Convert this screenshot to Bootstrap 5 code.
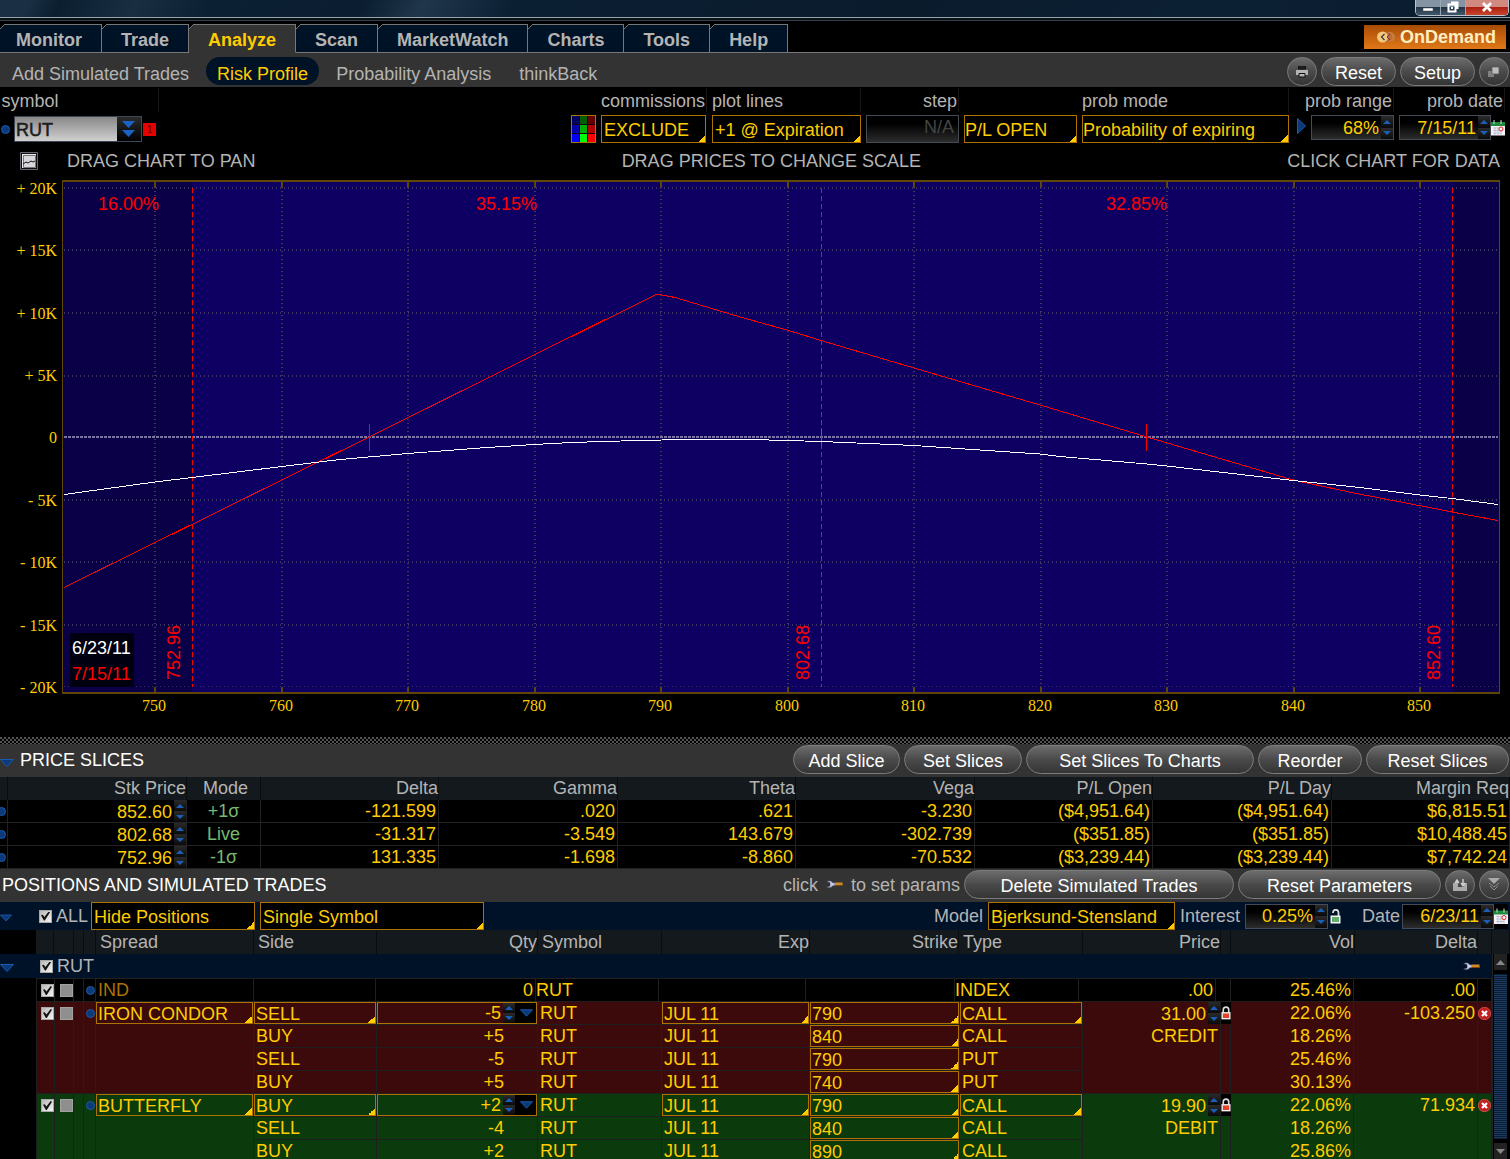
<!DOCTYPE html>
<html lang="en">
<head>
<meta charset="utf-8">
<meta name="viewport" content="width=device-width, initial-scale=1">
<title>Risk Profile</title>
<link href="https://cdn.jsdelivr.net/npm/bootstrap@5.3.0/dist/css/bootstrap.min.css" rel="stylesheet">
<style>
:root{--gold:#ffcc00;--grey:#b4b4b4;--bar:#333;--navy:#001228;--head:#13191d;--amber:#ad7200}
html{overflow:hidden}
body{background:#000;color:var(--grey);font:18px/22px "Liberation Sans",Arial,sans-serif;overflow:hidden;height:100vh}
button,input,select{font:inherit;color:inherit}
a{color:inherit;text-decoration:none}
svg{display:block;flex:none}
.titlebar{height:21px;background:linear-gradient(115deg,#1b2f44 0,#1b2f44 2%,#0a1e30 4%,#1a2e42 9%,#0c2033 14%,#0b1e31 24%,#20364a 28%,#0b1f33 34%,#0a1b2c 60%,#0c2034 80%,#0a1c2e 100%);border-bottom:1px solid #33404c;box-shadow:inset 0 -2px 0 #0a0f14,inset 0 -3px 0 #98a4ae}
.winbtns{height:16px;border:1px solid #b9c3cb;border-top:0;border-radius:0 0 5px 5px;overflow:hidden;margin-right:1px}
.winbtns button{border:0;border-right:1px solid #9aa7b2;background:linear-gradient(#8494a2 50%,#223546 50%,#40586c);height:15px;width:25px;padding:0;display:flex;justify-content:center}
.winbtns button:last-child{background:linear-gradient(#d08a80 45%,#a81c10 45%,#c8452c);width:42px;border:0}
.tabs{height:32px;padding-top:3px;border-bottom:1px solid #777}
.tabs a{position:relative;height:29px;line-height:30px;padding:0 19px;font-weight:700;background:#001226;border:1px solid #777;border-left:0}
.tabs a:first-child{padding-left:16px}
.tabs a::before{content:"";position:absolute;left:0;top:-1px;width:6px;height:6px;background:linear-gradient(135deg,#000 3px,#777 3px,#777 4px,transparent 4px)}
.tabs a.on{background:var(--bar);color:var(--gold);border-bottom-color:var(--bar)}
.ondemand{border:0;height:24px;padding:0 10px 0 12px;gap:4px;margin-right:4px;margin-top:1px;font-weight:700;color:#ffefc0;background:linear-gradient(#a84c06,#e07818);line-height:24px}
.strip{background:var(--bar)}
.sub{padding:4px 1px 1px}
.sub a{padding:0 11px;height:28px;line-height:34px;margin-right:6px}
.sub a.on{background:#001226;color:var(--gold);border-radius:14px}
.pill{height:29px;border:1px solid #7c7c7c;border-radius:15px;color:#fff;background:linear-gradient(#6c6c6c,#4a4a4a 50%,#353535);padding:2px 0 0;line-height:26px;text-align:center;white-space:nowrap}
.round{width:30px;padding:0;display:flex;align-items:center;justify-content:center}
.w1{width:75px}.w2{width:107px}.w3{width:118px}.w4{width:228px}.w5{width:104px}.w6{width:143px}.w7{width:270px}.w8{width:203px}
.gap4{gap:4px}.gap5{gap:5px}
.fieldcol{display:flex;flex-direction:column;align-items:stretch}
.fieldcol>label{height:24px;line-height:26px;margin:1px 0 3px;border-right:1px solid #161616;padding-right:1px;white-space:nowrap}
.pick{appearance:none;height:28px;border:1px solid var(--amber);border-radius:0;color:var(--gold);padding:2px 2px 0;background:linear-gradient(135deg,transparent 50%,var(--gold) 50%) right bottom/7px 7px no-repeat #000}
.numbox{display:flex;height:25px;border:1px solid #444b55;background:linear-gradient(#000 30%,#2c2c2c)}
.numbox input{flex:1;min-width:0;width:20px;border:0;background:none;color:var(--gold);text-align:right;padding:0 2px 0 0}
.stepper{display:flex;flex-direction:column;width:12px;flex:none;background:#000}
.stepper button{flex:1;border:0;padding:0;background:linear-gradient(#2a2a2a,#0a0a0a);display:flex;align-items:center;justify-content:center}
.stepper button::before{content:"";border:4px solid transparent;border-top:0;border-bottom:4px solid #1a5eb8}
.stepper button+button::before{border-bottom:0;border-top:4px solid #1a5eb8}
.blue{width:9px;height:9px;border-radius:50%;background:#0c3a78;border:1px solid #1a5ab0;flex:none}
.symbolbox{border:1px solid #3c4654;height:26px}
.symbolbox input{width:102px;height:24px;border:0;padding:2px 1px 0;color:#1c1c1c;-webkit-text-stroke:.5px #1c1c1c;background:linear-gradient(#888,#d0d0d0)}
.symbolbox button{width:24px;border:0;background:linear-gradient(#2c2c2c,#000);padding:0 0 0 5px}
.flag{width:13px;height:13px;font-size:10px;line-height:13px;background:#e80000;color:#400;text-align:center}
.grip{height:7px;margin:1px 0 0;background:radial-gradient(circle at 1px 1px,#555 1px,transparent 1px) 0 0/4px 4px,radial-gradient(circle at 1px 1px,#555 1px,transparent 1px) 2px 2px/4px 4px}
.section{height:33px}
.bartitle{color:#fff;font-size:18px;font-weight:400;margin:0;line-height:32px}
.grid{table-layout:fixed;width:100%;border-collapse:separate;border-spacing:0}
.grid th{font-weight:400;background:var(--head);height:23px;line-height:23px;border-right:1px solid #0a0d0f;padding:0 0 0 4px;white-space:nowrap}
.grid td{height:23px;line-height:22px;border-right:1px solid #1f1f1f;border-bottom:1px solid #1f1f1f;padding:0 2px;color:var(--gold);white-space:nowrap;vertical-align:top}
.grid td.cell{padding:0}
.slices td{border-color:#222}
.slices td:first-child{padding:0;overflow:hidden}
.slices td:first-child .blue{margin:7px 0 0 -3px;display:block}
.slices .mode{color:#78b872;text-align:center}
.slices .stepper{height:22px}
.inline{display:flex;justify-content:flex-end;height:22px}
.inline input{min-width:0;width:20px;flex:1;border:0;background:none;text-align:right;padding:2px 2px 0 0;color:var(--gold)}
.pos .pick{display:block;width:100%;height:22px;padding:0 1px 2px;background-color:transparent}
.qty{border:1px solid var(--amber);height:22px}
.qty .drop{width:21px;border:0;background:#000;padding:0 5px}
.grid td.leg{padding-right:33px}
.spreads .red td{background:#3c0a0a}
.spreads .green td{background:#0b3a0c}
.hdr th{height:24px}
.indent{padding-left:36px}
.indexrow td{border-top:1px solid #222;height:24px}
.indexrow td:first-child,.spreads td.first{border-left:1px solid #1f1f1f}
.allbar{background:var(--navy);height:28px}
.symbar{background:var(--navy);height:24px}
.tick{appearance:none;width:13px;height:13px;margin:0;background:linear-gradient(135deg,#b8b8b8,#f4f4f4);border:1px solid #a8a8a8;flex:none;display:block}
.tick:checked::before{content:"";display:block;width:9px;height:9px;margin:1px;background:#111;clip-path:polygon(0 42%,20% 35%,38% 62%,85% 0,100% 8%,42% 100%,32% 100%)}
.chip{display:block;width:13px;height:13px;background:#8f8f8f;border:1px solid #a2a2a2}
td .tick{margin:5px auto 0 4px}
td .chip{margin:5px auto 0 5px}
td .blue{display:block;margin:7px 0 0 2px}
.del{border:0;background:none;padding:0;display:block;margin-top:5px}
.vscroll{width:18px;flex:none;background:#000;border-left:1px solid #222;padding:0 3px 0 1px}
.vscroll button{height:16px;border:0;background:#222;padding:0;display:flex;align-items:center;justify-content:center}
.vscroll .thumb{background:repeating-linear-gradient(#0b1c33 0 1px,#1d3a60 1px 2px)}
.onblack{background:#000}
.chart text{font-family:"Liberation Sans",Arial,sans-serif;font-size:18px;fill:#f00}
.chart .ax text{font-family:"Liberation Serif","Times New Roman",serif;font-size:16px;fill:var(--gold)}
</style>
<script src="https://cdn.jsdelivr.net/npm/bootstrap@5.3.0/dist/js/bootstrap.bundle.min.js"></script>
</head>
<body class="d-flex flex-column">
<svg width="0" height="0" class="position-absolute" aria-hidden="true">
  <symbol id="cal" viewBox="0 0 14 16"><path d="M0 3h14v12.500H0z" fill="#f2f2f8"/><path d="M0 2h14v4H0z" fill="#1c8c3c"/><path d="M3 0v4M10 0v4" stroke="#ddd"/><path d="M2 8h10M2 10.500h10M2 13h8M4 7v8M7 7v8M10 7v8" stroke="#b8b8cc" stroke-width=".8"/><circle cx="10" cy="9" r="2" fill="#fff" stroke="#e22"/></symbol>
  <symbol id="wrench" viewBox="0 0 17 9"><path d="M.5 1.500Q4.500-.5 7 2.800H9v3H7Q4.500 9 .5 7L4 6V2.800z" fill="#c8cce8" stroke="#334" stroke-width=".5"/><path d="M9 2.500h7.500v3.500H9z" fill="#d08a28"/><path d="M9 5h7.500v1H9z" fill="#7a4408"/></symbol>
  <symbol id="lock" viewBox="0 0 11 15"><path d="M2.500 7V4a3 3 0 0 1 6 0v3" fill="none" stroke="#ddd" stroke-width="1.800"/><path d="M.5 6.500h10v8H.5z" fill="#f2f2f2"/><path d="M2 8h7v5H2z" fill="#e0452c"/></symbol>
  <symbol id="unlock" viewBox="0 0 11 15"><path d="M3 4V3.500a2.700 2.700 0 0 1 5.500 0V7" fill="none" stroke="#ddd" stroke-width="1.800"/><path d="M.5 6.500h10v8H.5z" fill="#f2f2f2"/><path d="M2 8h7v5H2z" fill="#5fae6a"/></symbol>
  <symbol id="tri" viewBox="0 0 14 8"><path d="M.5.500h13L7 7.500z" fill="#0c3a78" stroke="#1a5ab0"/></symbol>
  <symbol id="kill" viewBox="0 0 13 13"><circle cx="6.500" cy="6.500" r="6.200" fill="#c41e1e" stroke="#e87070" stroke-width=".6"/><path d="M4 4l5 5M9 4l-5 5" stroke="#fff" stroke-width="2.200"/></symbol>
</svg>

<div class="titlebar d-flex justify-content-end flex-shrink-0">
  <div class="winbtns d-flex">
    <button aria-label="Minimize"><svg width="14" height="13"><path d="M2 8h10v3H2z" fill="#fff" stroke="#445" stroke-width=".5"/></svg></button>
    <button aria-label="Restore"><svg width="14" height="13"><path d="M5 2.500h6.500V9M2.500 4.500h7v7h-7z" fill="none" stroke="#fff" stroke-width="2"/><path d="M5 7h2v2H5z" fill="#fff"/></svg></button>
    <button aria-label="Close"><svg width="14" height="13"><path d="M3 3l8 8M11 3l-8 8" stroke="#fff" stroke-width="2.800"/></svg></button>
  </div>
</div>

<nav class="tabs d-flex flex-shrink-0">
  <a href="#">Monitor</a><a href="#">Trade</a><a href="#" class="on">Analyze</a><a href="#">Scan</a><a href="#">MarketWatch</a><a href="#">Charts</a><a href="#">Tools</a><a href="#">Help</a>
  <button class="ondemand d-flex align-items-center ms-auto"><svg width="20" height="14" viewBox="0 0 20 14"><circle cx="14" cy="7" r="5" fill="#c87a40"/><circle cx="11" cy="7" r="5" fill="#b86a38"/><circle cx="6.500" cy="7" r="5.500" fill="#f4c878"/><path d="M8.500 4L5.500 7l3 3" fill="none" stroke="#335" stroke-width="1.200"/><path d="M14 4l-3 3 3 3" fill="none" stroke="#733"/></svg>OnDemand</button>
</nav>

<div class="strip sub d-flex flex-shrink-0">
  <a href="#">Add Simulated Trades</a><a href="#" class="on">Risk Profile</a><a href="#">Probability Analysis</a><a href="#">thinkBack</a>
  <div class="ms-auto d-flex gap4">
    <button class="pill round" aria-label="Print"><svg width="14" height="12"><path d="M3.500 0h7v3h-7z" fill="#222" stroke="#111"/><path d="M1 4h12v5H1z" fill="#b4b4b4"/><path d="M4 7.500h6v3.500H4z" fill="#b4b4b4" stroke="#111"/></svg></button>
    <button class="pill w1">Reset</button><button class="pill w1">Setup</button>
    <button class="pill round" aria-label="Detach"><svg width="12" height="12"><path d="M0 5h6v6H0z" fill="#808080"/><path d="M4 1h7v7H4z" fill="#bbb" stroke="#555" stroke-width=".7"/></svg></button>
  </div>
</div>

<div class="d-flex flex-shrink-0 gap5">
  <div class="fieldcol me-auto">
    <label for="sym" style="width:159px">&#8202;symbol</label>
    <div class="d-flex align-items-center" style="padding:1px 0 0 1px">
      <span class="blue me-1"></span>
      <div class="symbolbox d-flex"><input id="sym" value="RUT"><button aria-label="Symbol list"><svg width="14" height="16"><path d="M0 0h13L6.500 7zM0 9h13l-6.500 7z" fill="#1a62c4"/></svg></button></div>
      <span class="flag" style="margin-left:1px">1</span>
    </div>
  </div>
  <button class="border-0 p-0 bg-transparent align-self-end" aria-label="Plot colours"><svg width="25" height="28" shape-rendering="crispEdges"><path d="M.5.500h24v27H.5z" fill="#100010" stroke="#ad7200"/><path d="M1 1h7v8H1z" fill="#000060"/><path d="M9 1h7v8H9z" fill="#006000"/><path d="M17 1h7v8h-7z" fill="#600000"/><path d="M1 10h7v8H1z" fill="#0000b0"/><path d="M9 10h7v8H9z" fill="#00b000"/><path d="M17 10h7v8h-7z" fill="#b00000"/><path d="M1 19h7v8H1z" fill="#00f"/><path d="M9 19h7v8H9z" fill="#0f0"/><path d="M17 19h7v8h-7z" fill="#f00"/></svg></button>
  <div class="fieldcol"><label for="com">commissions</label><select id="com" class="pick" style="width:105px"><option>EXCLUDE</option></select></div>
  <div class="fieldcol"><label for="plt">plot lines</label><select id="plt" class="pick" style="width:149px"><option>+1 @ Expiration</option></select></div>
  <div class="fieldcol"><label for="stp" class="text-end">step</label><input id="stp" value="N/A" disabled class="numbox text-end px-1 pb-1" style="width:93px;height:28px;color:#444"></div>
  <div class="fieldcol"><label for="plo" class="border-0">&nbsp;</label><select id="plo" class="pick ps-0" style="width:113px"><option>P/L OPEN</option></select></div>
  <div class="fieldcol"><label for="pmode">prob mode</label><select id="pmode" class="pick ps-0" style="width:207px"><option>Probability of expiring</option></select></div>
  <button class="border-0 bg-transparent p-0 align-self-end mb-2" aria-label="Apply"><svg width="12" height="17"><path d="M3.500.5v15l8-7.500z" fill="#0c3a78" stroke="#1a5ab0"/></svg></button>
  <div class="fieldcol align-items-end" style="width:83px"><label for="prange">prob range</label><div class="numbox w-100"><input id="prange" value="68%"><span class="stepper"><button aria-label="Up"></button><button aria-label="Down"></button></span></div></div>
  <div class="fieldcol" style="padding-right:5px"><label for="pdate" class="text-end">prob date</label><div class="d-flex align-items-center"><div class="numbox" style="width:92px"><input id="pdate" value="7/15/11"><span class="stepper"><button aria-label="Up"></button><button aria-label="Down"></button></span></div><svg width="14" height="16"><use href="#cal"/></svg></div></div>
</div>

<div class="d-flex flex-shrink-0 align-items-center justify-content-between" style="height:29px;padding:7px 10px 0 20px">
  <div class="d-flex align-items-center"><button class="p-0 border-0 bg-transparent" aria-label="Chart style"><svg width="18" height="18"><path d="M.5.500h17v17H.5z" fill="#111" stroke="#667"/><path d="M2 2h14v14H2z" fill="#e8e8e8"/><path d="M3.500 3.500h12v12h-12z" fill="#d8d8dc" stroke="#777"/><path d="M3 12l3-2 2 1 3-2 2 1 2-1" stroke="#111" fill="none"/></svg></button><span style="margin-left:29px">DRAG CHART TO PAN</span></div>
  <span>DRAG PRICES TO CHANGE SCALE</span><span>CLICK CHART FOR DATA</span>
</div>

<svg class="chart flex-shrink-0" viewBox="0 172 1510 564" width="100%" role="img" aria-label="Risk profile chart">
  <g shape-rendering="crispEdges">
    <path d="M62 180h1438v514H62z" fill="#090048"/>
    <path d="M192 182h1261v510H192z" fill="#0e0062"/>
    <path d="M64 188H1499M64 250H1499M64 313H1499M64 376H1499M64 500H1499M64 562H1499M64 625H1499" stroke="#3a3560" stroke-width="2" stroke-dasharray="1 3"/>
    <path d="M64 686.500H1499" stroke="#3a3560" stroke-dasharray="1 3"/>
    <path d="M155 187V692M282 187V692M408 187V692M535 187V692M661 187V692M788 187V692M914 187V692M1041 187V692M1167 187V692M1294 187V692M1420 187V692" stroke="#4a3850" stroke-width="2" stroke-dasharray="1 3"/>
    <path d="M155 182v5m127-5v5m126-5v5m127-5v5m126-5v5m127-5v5m126-5v5m127-5v5m126-5v5m127-5v5m126-5v5M155 687v5m127-5v5m126-5v5m127-5v5m126-5v5m127-5v5m126-5v5m127-5v5m126-5v5m127-5v5m126-5v5" stroke="#5e4608" stroke-width="2"/>
    <path d="M62.500 181V693M1499.500 181V693" stroke="#5e4608"/>
    <path d="M62 181H1500M62 693H1500" stroke="#5e4608" stroke-width="2"/>
    <path d="M64 437H1498" stroke="#7c74a4" stroke-width="2" stroke-dasharray="3 1"/>
    <path d="M192.500 188V687M1452.500 188V687" stroke="#f00" stroke-dasharray="5 3"/>
    <path d="M821.500 188V687" stroke="#e01020" stroke-dasharray="5 3"/>
    <path d="M369.500 424v27M1146.500 424v27" stroke="#f00"/><path d="M821.500 429v17" stroke="#7a5a40"/>
    <path d="M64 587.500L369 437 656 294.500 662 295 675 297.500 740 317 787 330 821 340.500 914 368 1040 405 1147 437 1293 480 1354 493 1419 505.500 1452 512 1498 520.500" fill="none" stroke="#f00"/>
    <path d="M64 494.500L155 482 192 477.500 282 466.500 340 459.500 408 453.500 480 448 534 444.500 562 443 600 441.500 662 440 700 439.500 750 439.500 787 440.500 821 441.500 868 443.500 914 445.500 980 450 1040 454 1060 456.500 1147 464 1167 466 1293 480.500 1360 487.500 1420 495 1452 498.500 1498 504.500" fill="none" stroke="#fff"/>
    <path d="M70 633h64v54H70z" fill="#000010"/>
  </g>
  <text x="98" y="210">16.00%</text><text x="476" y="210">35.15%</text><text x="1106" y="210">32.85%</text>
  <text x="72" y="654" style="fill:#fff">6/23/11</text><text x="72" y="680">7/15/11</text>
  <text transform="translate(180 680) rotate(-90)">752.96</text><text transform="translate(809 680) rotate(-90)">802.68</text><text transform="translate(1440 680) rotate(-90)">852.60</text>
  <g class="ax" text-anchor="end"><text x="57" y="194">+ 20K</text><text x="57" y="256">+ 15K</text><text x="57" y="319">+ 10K</text><text x="57" y="381">+ 5K</text><text x="57" y="443">0</text><text x="57" y="506">- 5K</text><text x="57" y="568">- 10K</text><text x="57" y="631">- 15K</text><text x="57" y="693">- 20K</text></g>
  <g class="ax" text-anchor="middle"><text x="154" y="711">750</text><text x="281" y="711">760</text><text x="407" y="711">770</text><text x="534" y="711">780</text><text x="660" y="711">790</text><text x="787" y="711">800</text><text x="913" y="711">810</text><text x="1040" y="711">820</text><text x="1166" y="711">830</text><text x="1293" y="711">840</text><text x="1419" y="711">850</text></g>
</svg>
<div class="grip flex-shrink-0"></div>

<div class="strip section d-flex flex-shrink-0 align-items-start">
  <svg width="14" height="8" class="align-self-center mt-1"><use href="#tri"/></svg>
  <h2 class="bartitle me-auto" style="padding-left:6px">PRICE SLICES</h2>
  <div class="d-flex gap4" style="padding:1px 1px 0 0"><button class="pill w2">Add Slice</button><button class="pill w3">Set Slices</button><button class="pill w4">Set Slices To Charts</button><button class="pill w5">Reorder</button><button class="pill w6">Reset Slices</button></div>
</div>
<table class="grid slices flex-shrink-0 text-end">
  <colgroup><col style="width:8px"><col style="width:179px"><col style="width:74px"><col style="width:178px"><col style="width:179px"><col style="width:178px"><col style="width:179px"><col style="width:178px"><col style="width:179px"><col style="width:178px"></colgroup>
  <thead><tr><th></th><th>Stk Price</th><th class="text-center">Mode</th><th>Delta</th><th>Gamma</th><th>Theta</th><th>Vega</th><th>P/L Open</th><th>P/L Day</th><th>Margin Req</th></tr></thead>
  <tbody>
  <tr><td><span class="blue"></span></td><td class="cell"><div class="inline"><input aria-label="Stock price 1" value="852.60"><span class="stepper"><button aria-label="Up"></button><button aria-label="Down"></button></span></div></td><td class="mode">+1σ</td><td>-121.599</td><td>.020</td><td>.621</td><td>-3.230</td><td>($4,951.64)</td><td>($4,951.64)</td><td>$6,815.51</td></tr>
  <tr><td><span class="blue"></span></td><td class="cell"><div class="inline"><input aria-label="Stock price 2" value="802.68"><span class="stepper"><button aria-label="Up"></button><button aria-label="Down"></button></span></div></td><td class="mode">Live</td><td>-31.317</td><td>-3.549</td><td>143.679</td><td>-302.739</td><td>($351.85)</td><td>($351.85)</td><td>$10,488.45</td></tr>
  <tr><td><span class="blue"></span></td><td class="cell"><div class="inline"><input aria-label="Stock price 3" value="752.96"><span class="stepper"><button aria-label="Up"></button><button aria-label="Down"></button></span></div></td><td class="mode">-1σ</td><td>131.335</td><td>-1.698</td><td>-8.860</td><td>-70.532</td><td>($3,239.44)</td><td>($3,239.44)</td><td>$7,742.24</td></tr>
  </tbody>
</table>

<div class="strip section d-flex flex-shrink-0 align-items-start">
  <h2 class="bartitle me-auto" style="padding-left:2px">POSITIONS AND SIMULATED TRADES</h2>
  <div class="d-flex gap4 align-items-center" style="padding:1px 1px 0 0"><span class="d-flex align-items-center">click<svg width="17" height="9" class="mx-2"><use href="#wrench"/></svg>to set params</span>
  <button class="pill w7">Delete Simulated Trades</button><button class="pill w8">Reset Parameters</button>
  <button class="pill round" aria-label="Group"><svg width="17" height="14"><path d="M1 5v8h14V5h-3v4H4V5z" fill="#aaa"/><path d="M5 9V3M3 5l2-3 2 3M11 1v6M9 5l2 3 2-3" fill="none" stroke="#ccc" stroke-width="1.500"/></svg></button>
  <button class="pill round" aria-label="More"><svg width="12" height="13"><path d="M0 0h12L6 6z" fill="#aaa"/><path d="M1 5l5 4 5-4M2 8l4 4 4-4" stroke="#8c8c8c" fill="none"/></svg></button></div>
</div>
<div class="allbar d-flex align-items-center flex-shrink-0 gap5">
  <svg width="12" height="8" class="mt-1"><use href="#tri"/></svg>
  <input type="checkbox" class="tick" id="all" checked style="margin-left:22px"><label for="all" style="width:30px;margin-left:-1px">ALL</label>
  <select class="pick" aria-label="Positions" style="width:164px"><option>Hide Positions</option></select>
  <select class="pick me-auto" aria-label="Grouping" style="width:224px"><option>Single Symbol</option></select>
  <label for="model">Model</label><select id="model" class="pick" style="width:187px"><option>Bjerksund-Stensland</option></select>
  <label for="intr">Interest</label><div class="numbox" style="width:83px"><input id="intr" value="0.25%"><span class="stepper"><button aria-label="Up"></button><button aria-label="Down"></button></span></div>
  <svg width="11" height="15" style="margin-left:-3px"><use href="#unlock"/></svg>
  <div class="d-flex align-items-center" style="padding:0 2px 0 16px"><label for="dte" style="padding-right:2px">Date</label><div class="numbox" style="width:92px"><input id="dte" value="6/23/11"><span class="stepper"><button aria-label="Up"></button><button aria-label="Down"></button></span></div><svg width="14" height="25" class="onblack"><use href="#cal"/></svg></div>
</div>
<div class="indent hdr flex-shrink-0">
  <table class="grid text-end">
    <colgroup><col style="width:18px"><col style="width:20px"><col style="width:10px"><col style="width:12px"><col style="width:158px"><col style="width:123px"><col style="width:161px"><col style="width:124px"><col style="width:148px"><col style="width:149px"><col style="width:124px"><col style="width:138px"><col style="width:10px"><col style="width:124px"><col style="width:123px"><col style="width:14px"><col style="width:18px"></colgroup>
    <thead><tr><th></th><th></th><th></th><th></th><th class="text-start ps-1">Spread</th><th class="text-start ps-1">Side</th><th>Qty</th><th class="text-start ps-1">Symbol</th><th>Exp</th><th>Strike</th><th class="text-start ps-1">Type</th><th>Price</th><th></th><th>Vol</th><th>Delta</th><th></th><th></th></tr></thead>
  </table>
</div>
<div class="d-flex flex-grow-1 overflow-hidden" style="min-height:0">
  <div class="flex-grow-1 pos overflow-hidden">
    <div class="symbar d-flex align-items-center">
      <svg width="14" height="8" class="mt-1"><use href="#tri"/></svg>
      <input type="checkbox" class="tick" id="rut" checked style="margin-left:26px"><label for="rut" class="ps-1 me-auto">RUT</label>
      <svg width="17" height="9" style="margin-right:12px"><use href="#wrench"/></svg>
    </div>
    <div class="indent">
    <table class="grid indexrow">
      <colgroup><col style="width:19px"><col style="width:19px"><col style="width:10px"><col style="width:12px"><col style="width:158px"><col style="width:122px"><col style="width:160px"><col style="width:123px"><col style="width:147px"><col style="width:149px"><col style="width:124px"><col style="width:137px"><col style="width:15px"><col style="width:123px"><col style="width:124px"><col style="width:14px"></colgroup>
      <tbody><tr><td class="cell"><input type="checkbox" class="tick" aria-label="IND" checked></td><td class="cell"><span class="chip"></span></td><td></td><td class="cell"><span class="blue"></span></td><td class="text-start" style="color:#ad7200">IND</td><td></td><td class="text-end">0</td><td class="text-start ps-0">RUT</td><td></td><td></td><td class="text-start px-0">INDEX</td><td class="text-end">.00</td><td></td><td class="text-end">25.46%</td><td class="text-end">.00</td><td></td></tr></tbody>
    </table>
    <table class="grid spreads">
      <colgroup><col style="width:19px"><col style="width:19px"><col style="width:10px"><col style="width:12px"><col style="width:158px"><col style="width:123px"><col style="width:161px"><col style="width:124px"><col style="width:148px"><col style="width:150px"><col style="width:123px"><col style="width:138px"><col style="width:10px"><col style="width:123px"><col style="width:124px"><col style="width:14px"></colgroup>
      <tbody class="red">
      <tr><td rowspan="4" class="cell first"><input type="checkbox" class="tick" aria-label="Iron condor" checked></td><td rowspan="4" class="cell"><span class="chip"></span></td><td rowspan="4"></td><td rowspan="4" class="cell"><span class="blue"></span></td><td rowspan="4" class="cell"><select class="pick" aria-label="Spread"><option>IRON CONDOR</option></select></td><td class="cell"><select class="pick" aria-label="Side"><option>SELL</option></select></td><td class="cell"><div class="inline qty"><input aria-label="Quantity" value="-5" class="pt-0"><span class="stepper"><button aria-label="Up"></button><button aria-label="Down"></button></span><button class="drop" aria-label="Choose"><svg width="13" height="8"><use href="#tri"/></svg></button></div></td><td class="text-start">RUT</td><td class="cell"><select class="pick" aria-label="Expiry"><option>JUL 11</option></select></td><td class="cell"><select class="pick" aria-label="Strike"><option>790</option></select></td><td class="cell"><select class="pick" aria-label="Type"><option>CALL</option></select></td><td class="cell border-bottom-0"><div class="inline prc"><input aria-label="Price" value="31.00"><span class="stepper"><button aria-label="Up"></button><button aria-label="Down"></button></span></div></td><td rowspan="4" class="cell"><svg width="10" height="22" class="onblack"><use href="#lock"/></svg></td><td class="text-end border-bottom-0">22.06%</td><td rowspan="4" class="text-end">-103.250</td><td rowspan="4" class="cell"><button class="del" aria-label="Delete"><svg width="13" height="13"><use href="#kill"/></svg></button></td></tr>
      <tr><td class="text-start">BUY</td><td class="text-end leg">+5</td><td class="text-start">RUT</td><td class="text-start">JUL 11</td><td class="cell"><select class="pick" aria-label="Strike"><option>840</option></select></td><td class="text-start">CALL</td><td class="text-end border-bottom-0">CREDIT</td><td class="text-end border-bottom-0">18.26%</td></tr>
      <tr><td class="text-start">SELL</td><td class="text-end leg">-5</td><td class="text-start">RUT</td><td class="text-start">JUL 11</td><td class="cell"><select class="pick" aria-label="Strike"><option>790</option></select></td><td class="text-start">PUT</td><td class="border-bottom-0"></td><td class="text-end border-bottom-0">25.46%</td></tr>
      <tr><td class="text-start">BUY</td><td class="text-end leg">+5</td><td class="text-start">RUT</td><td class="text-start">JUL 11</td><td class="cell"><select class="pick" aria-label="Strike"><option>740</option></select></td><td class="text-start">PUT</td><td></td><td class="text-end">30.13%</td></tr>
      </tbody>
      <tbody class="green">
      <tr><td rowspan="3" class="cell first"><input type="checkbox" class="tick" aria-label="Butterfly" checked></td><td rowspan="3" class="cell"><span class="chip"></span></td><td rowspan="3"></td><td rowspan="3" class="cell"><span class="blue"></span></td><td rowspan="3" class="cell"><select class="pick" aria-label="Spread"><option>BUTTERFLY</option></select></td><td class="cell"><select class="pick" aria-label="Side"><option>BUY</option></select></td><td class="cell"><div class="inline qty"><input aria-label="Quantity" value="+2" class="pt-0"><span class="stepper"><button aria-label="Up"></button><button aria-label="Down"></button></span><button class="drop" aria-label="Choose"><svg width="13" height="8"><use href="#tri"/></svg></button></div></td><td class="text-start">RUT</td><td class="cell"><select class="pick" aria-label="Expiry"><option>JUL 11</option></select></td><td class="cell"><select class="pick" aria-label="Strike"><option>790</option></select></td><td class="cell"><select class="pick" aria-label="Type"><option>CALL</option></select></td><td class="cell border-bottom-0"><div class="inline prc"><input aria-label="Price" value="19.90"><span class="stepper"><button aria-label="Up"></button><button aria-label="Down"></button></span></div></td><td rowspan="3" class="cell"><svg width="10" height="22" class="onblack"><use href="#lock"/></svg></td><td class="text-end border-bottom-0">22.06%</td><td rowspan="3" class="text-end">71.934</td><td rowspan="3" class="cell"><button class="del" aria-label="Delete"><svg width="13" height="13"><use href="#kill"/></svg></button></td></tr>
      <tr><td class="text-start">SELL</td><td class="text-end leg">-4</td><td class="text-start">RUT</td><td class="text-start">JUL 11</td><td class="cell"><select class="pick" aria-label="Strike"><option>840</option></select></td><td class="text-start">CALL</td><td class="text-end border-bottom-0">DEBIT</td><td class="text-end border-bottom-0">18.26%</td></tr>
      <tr><td class="text-start">BUY</td><td class="text-end leg">+2</td><td class="text-start">RUT</td><td class="text-start">JUL 11</td><td class="cell"><select class="pick" aria-label="Strike"><option>890</option></select></td><td class="text-start">CALL</td><td></td><td class="text-end">25.86%</td></tr>
      </tbody>
    </table>
    </div>
  </div>
  <div class="vscroll d-flex flex-column">
    <button aria-label="Scroll up"><svg width="9" height="5"><path d="M0 5h9L4.500 0z" fill="#888"/></svg></button>
    <div class="thumb flex-grow-1 my-1"></div>
    <button aria-label="Scroll down"><svg width="9" height="5"><path d="M0 0h9L4.500 5z" fill="#888"/></svg></button>
  </div>
</div>
</body>
</html>
